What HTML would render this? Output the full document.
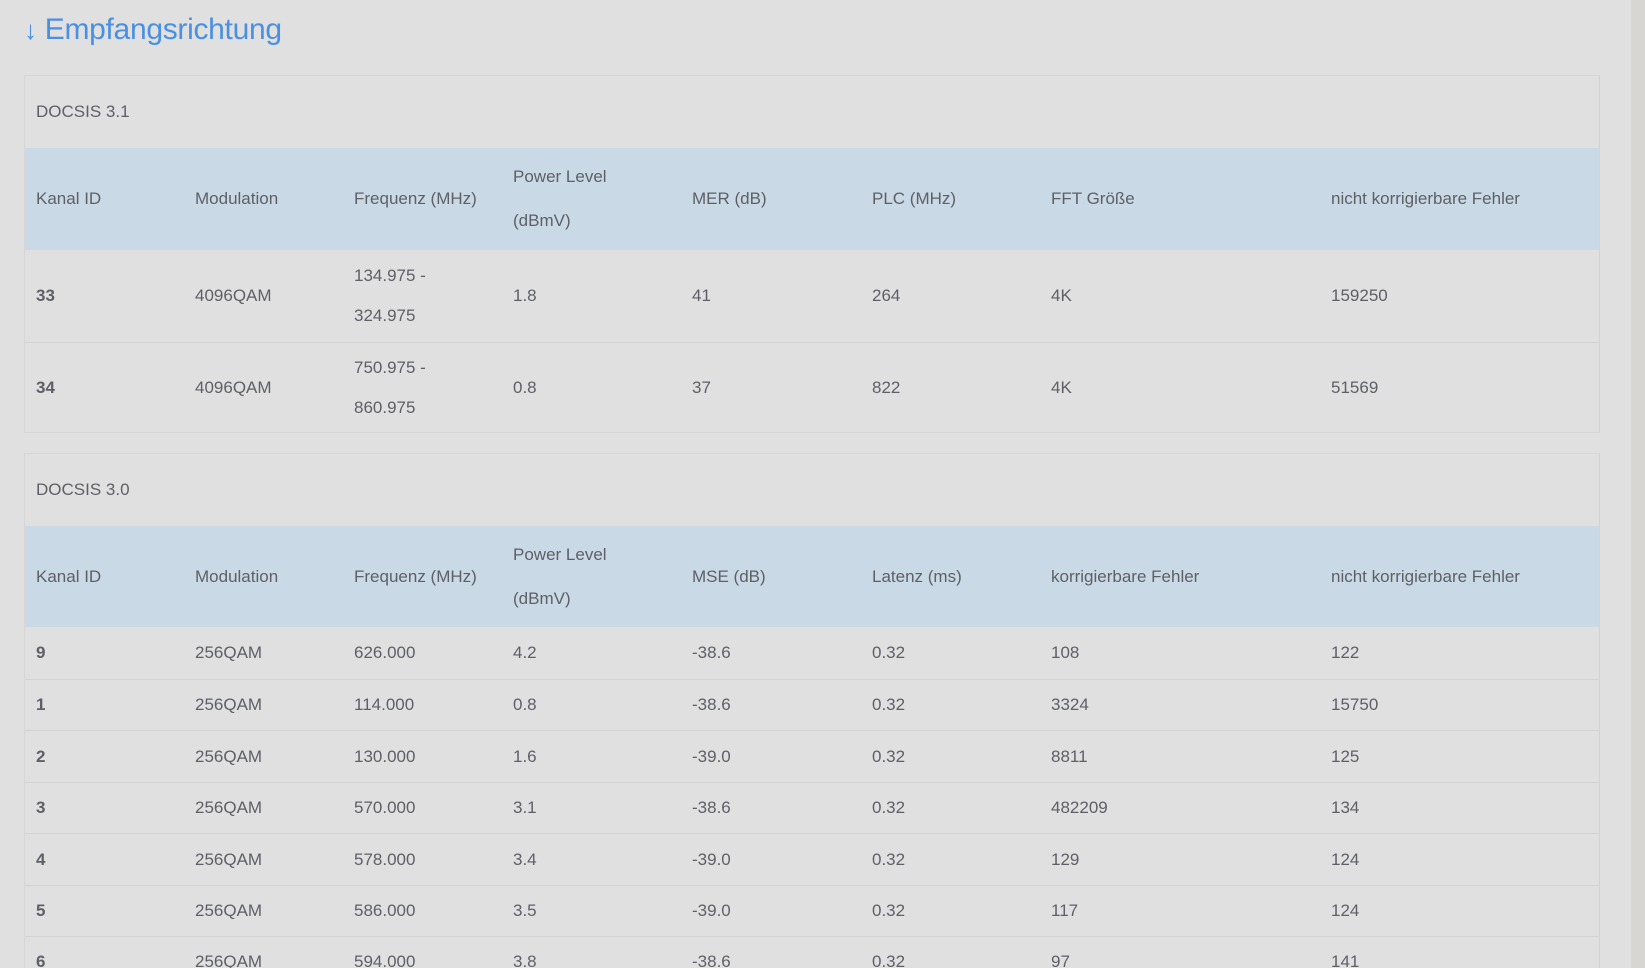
<!DOCTYPE html>
<html style="height:968px;overflow:hidden"><head><meta charset="utf-8"><style>
*{margin:0;padding:0;box-sizing:border-box}
body{width:1645px;height:968px;overflow:hidden;background:#e0e0e0;font-family:"Liberation Sans",sans-serif;color:#5e6066;font-size:17px;position:relative}
#w{position:absolute;left:0;top:0;width:1645px;height:968px;overflow:hidden}
.sb{position:absolute;left:1631px;top:0;width:14px;height:968px;background:#d8d6d2}
h1{position:absolute;left:24px;top:13px;font-weight:normal;font-size:30px;color:#4a90e2;letter-spacing:-0.3px}
.t{position:absolute;left:24px;width:1576px;border:1px solid #d6d6d6;border-right-color:#d2d2d2}
.cap{height:72px;line-height:72px;padding-left:11px;color:#5e6066}
.hd{background:#c9d9e6;position:relative}
.r{position:relative;border-top:1px solid #d3d3d3}
.c{position:absolute;top:0;height:100%;display:flex;align-items:center}
.b{font-weight:bold}
</style></head><body><div id="w">
<div class="sb"></div>
<h1><span style="font-size:26px">↓</span> Empfangsrichtung</h1>
<div class="t" style="top:75px">
<div class="cap">DOCSIS 3.1</div>
<div class="hd" style="height:102px">
<div class="c" style="left:11px">Kanal ID</div><div class="c" style="left:170px">Modulation</div><div class="c" style="left:329px">Frequenz (MHz)</div><div class="c" style="left:488px;line-height:44px">Power Level<br>(dBmV)</div><div class="c" style="left:667px">MER (dB)</div><div class="c" style="left:847px">PLC (MHz)</div><div class="c" style="left:1026px">FFT Größe</div><div class="c" style="left:1306px">nicht korrigierbare Fehler</div>
</div>
<div class="r" style="height:92px;border-top:none"><div class="c b" style="left:11px">33</div><div class="c" style="left:170px">4096QAM</div><div class="c" style="left:329px;line-height:40px">134.975 -<br>324.975</div><div class="c" style="left:488px">1.8</div><div class="c" style="left:667px">41</div><div class="c" style="left:847px">264</div><div class="c" style="left:1026px">4K</div><div class="c" style="left:1306px">159250</div></div>
<div class="r" style="height:90px"><div class="c b" style="left:11px">34</div><div class="c" style="left:170px">4096QAM</div><div class="c" style="left:329px;line-height:40px">750.975 -<br>860.975</div><div class="c" style="left:488px">0.8</div><div class="c" style="left:667px">37</div><div class="c" style="left:847px">822</div><div class="c" style="left:1026px">4K</div><div class="c" style="left:1306px">51569</div></div>
</div>
<div class="t" style="top:453px;height:540px">
<div class="cap">DOCSIS 3.0</div>
<div class="hd" style="height:101px">
<div class="c" style="left:11px">Kanal ID</div><div class="c" style="left:170px">Modulation</div><div class="c" style="left:329px">Frequenz (MHz)</div><div class="c" style="left:488px;line-height:44px">Power Level<br>(dBmV)</div><div class="c" style="left:667px">MSE (dB)</div><div class="c" style="left:847px">Latenz (ms)</div><div class="c" style="left:1026px">korrigierbare Fehler</div><div class="c" style="left:1306px">nicht korrigierbare Fehler</div>
</div>
<div class="r" style="height:52px;border-top:none"><div class="c b" style="left:11px">9</div><div class="c" style="left:170px">256QAM</div><div class="c" style="left:329px">626.000</div><div class="c" style="left:488px">4.2</div><div class="c" style="left:667px">-38.6</div><div class="c" style="left:847px">0.32</div><div class="c" style="left:1026px">108</div><div class="c" style="left:1306px">122</div></div>
<div class="r" style="height:51px"><div class="c b" style="left:11px">1</div><div class="c" style="left:170px">256QAM</div><div class="c" style="left:329px">114.000</div><div class="c" style="left:488px">0.8</div><div class="c" style="left:667px">-38.6</div><div class="c" style="left:847px">0.32</div><div class="c" style="left:1026px">3324</div><div class="c" style="left:1306px">15750</div></div>
<div class="r" style="height:52px"><div class="c b" style="left:11px">2</div><div class="c" style="left:170px">256QAM</div><div class="c" style="left:329px">130.000</div><div class="c" style="left:488px">1.6</div><div class="c" style="left:667px">-39.0</div><div class="c" style="left:847px">0.32</div><div class="c" style="left:1026px">8811</div><div class="c" style="left:1306px">125</div></div>
<div class="r" style="height:51px"><div class="c b" style="left:11px">3</div><div class="c" style="left:170px">256QAM</div><div class="c" style="left:329px">570.000</div><div class="c" style="left:488px">3.1</div><div class="c" style="left:667px">-38.6</div><div class="c" style="left:847px">0.32</div><div class="c" style="left:1026px">482209</div><div class="c" style="left:1306px">134</div></div>
<div class="r" style="height:52px"><div class="c b" style="left:11px">4</div><div class="c" style="left:170px">256QAM</div><div class="c" style="left:329px">578.000</div><div class="c" style="left:488px">3.4</div><div class="c" style="left:667px">-39.0</div><div class="c" style="left:847px">0.32</div><div class="c" style="left:1026px">129</div><div class="c" style="left:1306px">124</div></div>
<div class="r" style="height:51px"><div class="c b" style="left:11px">5</div><div class="c" style="left:170px">256QAM</div><div class="c" style="left:329px">586.000</div><div class="c" style="left:488px">3.5</div><div class="c" style="left:667px">-39.0</div><div class="c" style="left:847px">0.32</div><div class="c" style="left:1026px">117</div><div class="c" style="left:1306px">124</div></div>
<div class="r" style="height:51px"><div class="c b" style="left:11px">6</div><div class="c" style="left:170px">256QAM</div><div class="c" style="left:329px">594.000</div><div class="c" style="left:488px">3.8</div><div class="c" style="left:667px">-38.6</div><div class="c" style="left:847px">0.32</div><div class="c" style="left:1026px">97</div><div class="c" style="left:1306px">141</div></div>
</div>
</div></body></html>
